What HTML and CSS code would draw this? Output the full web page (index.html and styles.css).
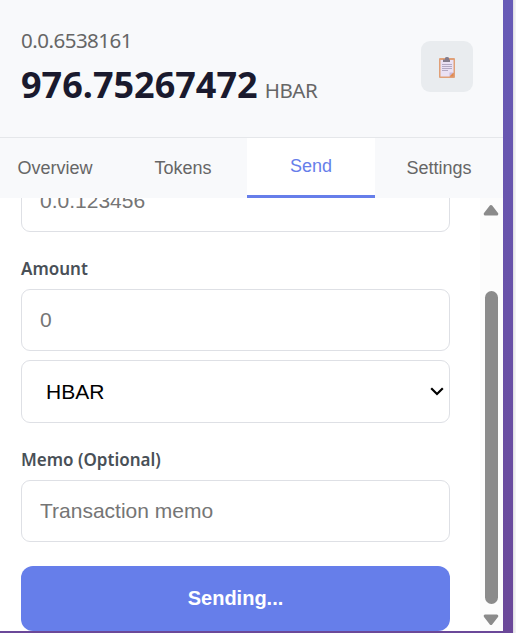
FILE: index.html
```html
<!DOCTYPE html>
<html lang="en">
<head>
<meta charset="utf-8">
<title>Wallet</title>
<link rel="stylesheet" href="styles.css">
</head>
<body>
<div class="frame">
  <main class="wallet">
    <header class="header">
      <div class="account">
        <div class="account-id">0.0.6538161</div>
        <div class="balance"><span class="amount">976.75267472</span><span class="unit">HBAR</span></div>
      </div>
      <button class="copy" aria-label="Copy account ID">
        <svg width="16" height="21" viewBox="0 0 16 21">
          <rect width="16" height="20" y="1" rx="1" fill="#e0a078"/>
          <path d="M1.500 3h13v12.500l-4 4h-9z" fill="#eae1f4"/>
          <path d="M10.500 19.500v-4h4z" fill="#c9b9dc"/>
          <path d="M10.500 19.500l4-4v4z" fill="#df884f"/>
          <path d="M4 2.500h2V1.200Q6 0 8 0t2 1.200v1.300h1V5H4z" fill="#827b8b"/>
          <path d="M3 7.500h10M3 9.500h10M3 11.500h10M3 13.500h6" stroke="#b3a9c3"/>
        </svg>
      </button>
    </header>
    <nav class="tabs">
      <button class="tab">Overview</button>
      <button class="tab">Tokens</button>
      <button class="tab active">Send</button>
      <button class="tab">Settings</button>
    </nav>
    <div class="body">
      <form class="form">
        <input class="field recipient" type="text" placeholder="0.0.123456">
        <label class="label" for="amount">Amount</label>
        <input class="field" id="amount" type="text" placeholder="0">
        <div class="field select">
          <span>HBAR</span>
          <svg width="14" height="9" viewBox="0 0 14 9"><path d="M1.200 1.300L7 7l5.800-5.700" fill="none" stroke="#000" stroke-width="2.200"/></svg>
        </div>
        <label class="label" for="memo">Memo (Optional)</label>
        <input class="field" id="memo" type="text" placeholder="Transaction memo">
        <button class="submit" type="button">Sending...</button>
      </form>
      <div class="scrollbar">
        <svg class="arrow" width="16" height="12" viewBox="0 0 16 12"><path d="M8 2.500L2.200 10h11.600z" fill="#8b8b8b" stroke="#8b8b8b" stroke-width="3" stroke-linejoin="round"/></svg>
        <div class="thumb"></div>
        <svg class="arrow" width="16" height="12" viewBox="0 0 16 12"><path d="M8 9.500L2.200 2h11.600z" fill="#8b8b8b" stroke="#8b8b8b" stroke-width="3" stroke-linejoin="round"/></svg>
      </div>
    </div>
  </main>
</div>
</body>
</html>
```
FILE: styles.css
```css
* { box-sizing: border-box; }
body {
  margin: 0;
  height: 633px;
  overflow: hidden;
  background: linear-gradient(90deg, #dcdce0 513px, #f3f3f4 515px);
  font-family: "Noto Sans", sans-serif;
}
button { border: 0; padding: 0; font-family: "Liberation Sans", sans-serif; }
.frame {
  width: 513px;
  height: 633px;
  background: linear-gradient(180deg, #675bb7, #6b4899);
}
.wallet {
  display: flex;
  flex-direction: column;
  width: 503px;
  height: 631px;
  background: #fff;
}
.header {
  display: flex;
  flex: none;
  justify-content: space-between;
  height: 138px;
  padding: 25px 30px 0 21px;
  background: #f8f9fb;
  border-bottom: 1px solid #e5e7ea;
}
.account-id {
  color: #666;
  font-size: 20.5px;
  line-height: 30px;
  letter-spacing: -0.5px;
}
.balance {
  display: flex;
  align-items: baseline;
  gap: 7px;
  margin-top: 5px;
  line-height: 50px;
}
.amount { color: #1a1a2e; font-size: 36px; font-weight: 700; }
.unit { color: #666; font-size: 20.5px; letter-spacing: -0.4px; }
.copy {
  display: flex;
  align-items: center;
  justify-content: center;
  width: 52px;
  height: 51px;
  margin-top: 16px;
  padding-top: 2px;
  border-radius: 9px;
  background: #e9ecef;
}
.tabs {
  display: grid;
  flex: none;
  grid-template-columns: 119px repeat(3, 128px);
  height: 60px;
  background: #f8f9fb;
}
.tab { background: none; color: #666; font-size: 18px; }
.tab:first-child { padding-right: 9px; }
.tab.active { background: #fff; color: #667eea; border-bottom: 3px solid #667eea; }
.body {
  display: flex;
  justify-content: space-between;
  flex: 1;
  min-height: 0;
  overflow: hidden;
}
.form {
  display: flex;
  flex-direction: column;
  width: 450px;
  height: 433px;
  padding-left: 21px;
}
.field {
  flex: none;
  width: 429px;
  height: 62px;
  margin: 0;
  padding: 0 18px;
  border: 1px solid #dee0e5;
  border-radius: 9px;
  background: #fff;
  font: 21px "Liberation Sans", sans-serif;
}
.field::placeholder { color: #757575; opacity: 1; }
.recipient { margin-top: -28px; }
.label {
  flex: none;
  height: 24px;
  margin: 25px 0 8px;
  color: #495057;
  font-size: 17px;
  font-weight: 600;
  line-height: 24px;
}
.select {
  display: flex;
  align-items: center;
  justify-content: space-between;
  height: 63px;
  margin-top: 9px;
  padding: 0 5px 0 24px;
}
.submit {
  flex: none;
  width: 429px;
  height: 65px;
  margin-top: 24px;
  border-radius: 12px;
  background: #667eea;
  color: #fff;
  font-size: 20px;
  font-weight: 700;
}
.scrollbar {
  display: flex;
  flex-direction: column;
  align-items: center;
  width: 23px;
  height: 433px;
  padding-top: 6px;
  background: #fcfcfc;
}
.arrow { flex: none; margin-right: 1px; }
.thumb {
  width: 13px;
  height: 313px;
  margin: 75px 0 10px;
  border-radius: 7px;
  background: #8b8b8b;
}
```
